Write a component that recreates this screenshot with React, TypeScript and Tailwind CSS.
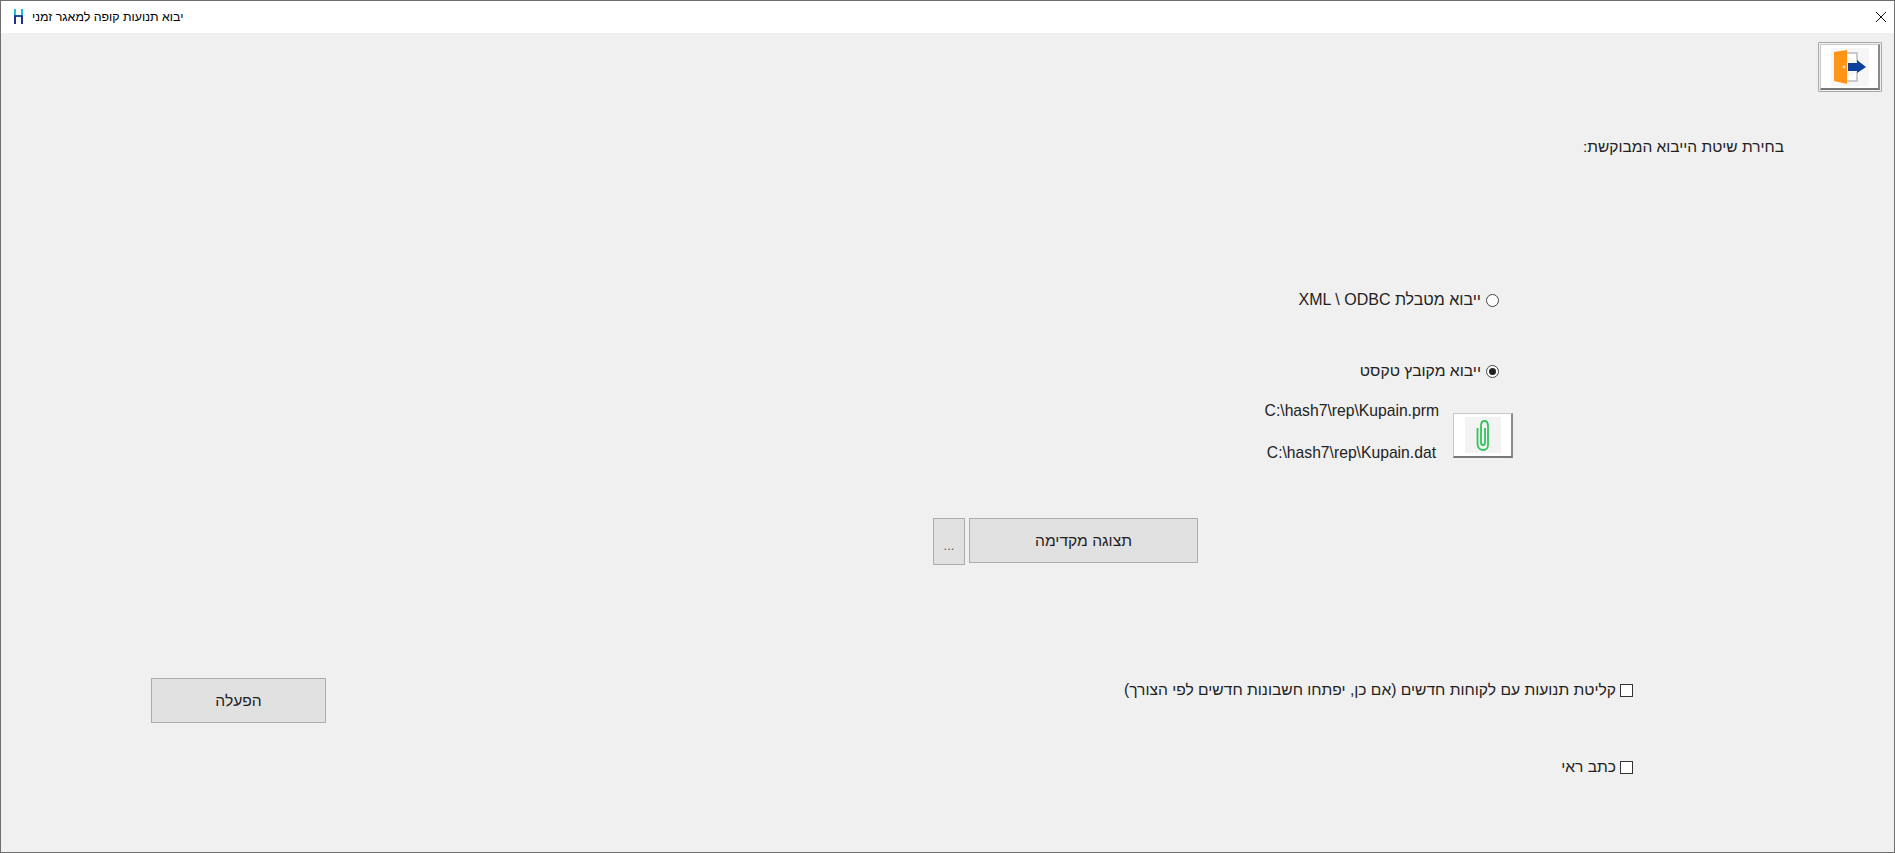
const font = "font-['Liberation_Sans',sans-serif]"

const DoorIcon = () => (
  <svg width="38" height="38" viewBox="0 0 38 38">
    <rect x="0" y="0" width="38" height="38" fill="#f6f6f6" />
    <path d="M12 5 H26 V14 M26 24 V33 H12" fill="#fff" stroke="#b9bcc0" strokeWidth="1.5" />
    <path d="M3 4 L16 2 V36 L3 33 Z" fill="#ff9416" />
    <circle cx="13" cy="19" r="1.400" fill="#ffe3b8" />
    <path d="M17 15 H26 V12 L35 19 L26 25 V23 H17 Z" fill="#0a3f9e" />
  </svg>
)

const ClipIcon = () => (
  <svg width="36" height="36" viewBox="0 0 36 36">
    <rect x="0" y="0" width="36" height="36" fill="#f3f3f3" />
    <path
      d="M20 11 V26 C20 27.500 19.200 28 18.200 28 C17 28 16 27.500 16 26 V9 C16 6 17.500 4 19.500 4 C21.500 4 23 6 23 9 V28 C23 31 21 33 18.500 33 C15.500 33 12.500 31 12.500 27 V11"
      fill="none"
      stroke="#35c45c"
      strokeWidth="1.800"
    />
  </svg>
)

const AppLogo = () => (
  <svg width="9" height="15" viewBox="0 0 9 15">
    <rect x="0" y="0" width="2" height="8" fill="#19c3d6" />
    <rect x="7" y="0" width="2" height="8" fill="#19c3d6" />
    <rect x="0" y="6" width="9" height="2" fill="#1b4fa8" />
    <rect x="0" y="7" width="2" height="8" fill="#1c2f8c" />
    <rect x="7" y="7" width="2" height="8" fill="#1c2f8c" />
  </svg>
)

const FlatButton = ({ label, className }: { label: string; className: string }) => (
  <div className={`flex items-center justify-center border border-[#adadad] bg-[#e1e1e1] text-[#222] ${className}`}>
    {label}
  </div>
)

const RaisedButton = ({ children, className }: { children: React.ReactNode; className: string }) => (
  <div className={`flex items-center justify-center border border-[#c8c8c8] border-r-2 border-r-[#8a8a8a] border-b-2 border-b-[#777] bg-white ${className}`}>
    {children}
  </div>
)

const Radio = ({ checked }: { checked?: boolean }) => (
  <span className="flex h-[13px] w-[13px] items-center justify-center rounded-full border border-[#444] bg-white">
    {checked && <span className="h-[7px] w-[7px] rounded-full bg-[#222]" />}
  </span>
)

const Check = () => <span className="h-[13px] w-[13px] border border-[#333] bg-white" />

export default function App() {
  return (
    <div className={`flex h-[853px] w-[1895px] flex-col border border-[#6e6e6e] bg-[#f0f0f0] text-[#222] ${font}`}>
      {/* title bar */}
      <div className="flex h-[32px] items-center justify-between bg-white pl-[13px] pr-[7px]">
        <div className="flex items-center gap-[9px]">
          <AppLogo />
          <span dir="rtl" className="text-[12.400px] text-black">יבוא תנועות קופה למאגר זמני</span>
        </div>
        <svg width="12" height="12" viewBox="0 0 12 12">
          <path d="M1 1 L11 11 M11 1 L1 11" stroke="#111" strokeWidth="1" />
        </svg>
      </div>

      <div className="flex flex-1 flex-col">
        <div className="flex justify-end pr-[12px] pt-[9px]">
          <div className="rounded-[1px] border border-[#a8a8a8] p-[1px]">
            <RaisedButton className="h-[46px] w-[60px]"><DoorIcon /></RaisedButton>
          </div>
        </div>

        <div className="mt-[46px] flex justify-end pr-[110px]">
          <span dir="rtl" className="text-[15.500px] leading-[18px]">בחירת שיטת הייבוא המבוקשת:</span>
        </div>

        <div className="mt-[135px] flex items-center justify-end gap-[5px] pr-[395px]">
          <span dir="rtl" className="text-[16px] leading-[18px]">ייבוא מטבלת XML \ ODBC</span>
          <Radio />
        </div>

        <div className="mt-[53px] flex items-center justify-end gap-[5px] pr-[395px]">
          <span dir="rtl" className="text-[15.700px] leading-[18px]">ייבוא מקובץ טקסט</span>
          <Radio checked />
        </div>

        <div className="mt-[22px] flex items-start justify-end gap-[14px] pr-[381px]">
          <div className="flex flex-col items-end gap-[24px] text-[15.700px] leading-[18px]">
            <span>C:\hash7\rep\Kupain.prm</span>
            <span className="pr-[3px]">C:\hash7\rep\Kupain.dat</span>
          </div>
          <RaisedButton className="mt-[11px] h-[45px] w-[60px]"><ClipIcon /></RaisedButton>
        </div>

        <div className="mt-[56px] flex items-start gap-[4px] pl-[932px]">
          <FlatButton label="..." className="h-[47px] w-[32px] pt-[8px] text-[13px] text-[#555]" />
          <FlatButton label="תצוגה מקדימה" className="h-[45px] w-[229px] text-[15.600px]" />
        </div>

        <div className="mt-[113px] flex items-start justify-between pl-[150px] pr-[261px]">
          <FlatButton label="הפעלה" className="h-[45px] w-[175px] text-[15.600px]" />
          <div className="mt-[3px] flex items-center gap-[4px]">
            <span dir="rtl" className="text-[15.600px] leading-[18px]">קליטת תנועות עם לקוחות חדשים (אם כן, יפתחו חשבונות חדשים לפי הצורך)</span>
            <Check />
          </div>
        </div>

        <div className="mt-[35px] flex items-center justify-end gap-[4px] pr-[261px]">
          <span dir="rtl" className="text-[15.600px] leading-[18px]">כתב ראי</span>
          <Check />
        </div>
      </div>
    </div>
  )
}
